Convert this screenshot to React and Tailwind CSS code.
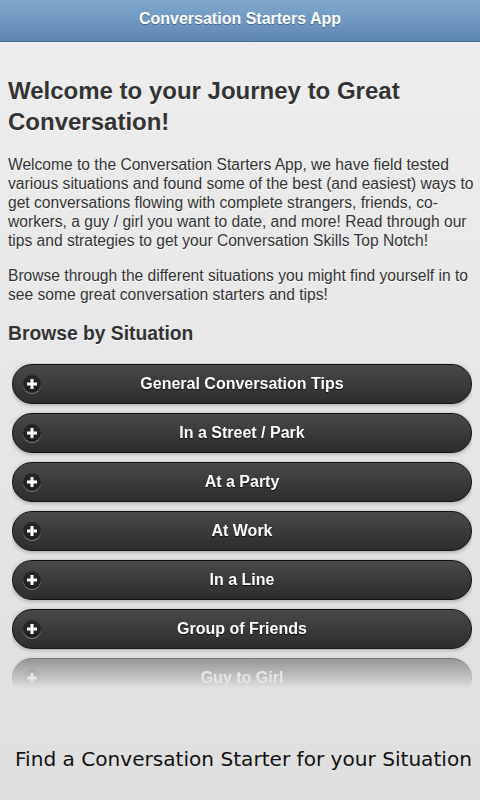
import React from "react";

const items = [
  "General Conversation Tips",
  "In a Street / Park",
  "At a Party",
  "At Work",
  "In a Line",
  "Group of Friends",
  "Guy to Girl",
];

function PlusIcon() {
  return (
    <span className="absolute left-[10px] top-1/2 -translate-y-1/2 w-[18px] h-[18px] rounded-full bg-[rgba(0,0,0,0.4)] shadow-[0_1px_0_rgba(255,255,255,0.4)] flex items-center justify-center">
      <svg width="12" height="12" viewBox="0 0 12 12">
        <rect x="4.5" y="1" width="3" height="10" fill="#fff" />
        <rect x="1" y="4.5" width="10" height="3" fill="#fff" />
      </svg>
    </span>
  );
}

export default function App() {
  return (
    <div
      className="w-[480px] h-[800px] overflow-hidden flex flex-col bg-gradient-to-b from-[#eeeeee] to-[#dfdfdf] text-[#333333]"
      style={{ fontFamily: '"Liberation Sans", Arial, sans-serif' }}
    >
      <header className="h-[42px] shrink-0 border-b border-[#456f9a] bg-gradient-to-b from-[#81a8ce] to-[#5e87b0] flex items-center justify-center pb-[4px]">
        <h1 className="text-white font-bold text-[16px] [text-shadow:0_1px_0_#3e6790]">
          Conversation Starters App
        </h1>
      </header>
      <main className="px-2 [text-shadow:0_1px_0_#ffffff]">
        <h2 className="mt-[33px] text-[24px] leading-[31px] font-bold">
          Welcome to your Journey to Great Conversation!
        </h2>
        <p className="mt-[18px] -mr-[4px] text-[15.6px] leading-[19px]">
          Welcome to the Conversation Starters App, we have field tested various situations and found some of the best (and easiest) ways to get conversations flowing with complete strangers, friends, co-workers, a guy / girl you want to date, and more! Read through our tips and strategies to get your Conversation Skills Top Notch!
        </p>
        <p className="mt-[16px] -mr-[4px] text-[15.6px] leading-[19px]">
          Browse through the different situations you might find yourself in to see some great conversation starters and tips!
        </p>
        <h3 className="mt-[18px] text-[19.3px] leading-[24px] font-bold">
          Browse by Situation
        </h3>
        <div className="mt-[17px] ml-[4px] h-[327px] overflow-hidden [mask-image:linear-gradient(to_bottom,#000_285px,rgba(0,0,0,0.5)_295px,transparent_325px)]">
          <ul className="flex flex-col gap-[9px] pt-[1px]">
            {items.map((t) => (
              <li
                key={t}
                className="relative h-[40px] rounded-[20px] border border-[#111111] bg-gradient-to-b from-[#494949] to-[#2d2d2d] shadow-[0_1px_4px_rgba(0,0,0,0.3)] flex items-center justify-center text-white font-bold text-[16px] [text-shadow:0_1px_1px_#111111]"
              >
                <PlusIcon />
                <span>{t}</span>
              </li>
            ))}
          </ul>
        </div>
      </main>
      <div className="mt-[57px] pl-[15px] text-[20.1px] leading-[24px] text-[#111111] whitespace-nowrap" style={{ fontFamily: '"DejaVu Sans", sans-serif' }}>
        Find a Conversation Starter for your Situation
      </div>
    </div>
  );
}
